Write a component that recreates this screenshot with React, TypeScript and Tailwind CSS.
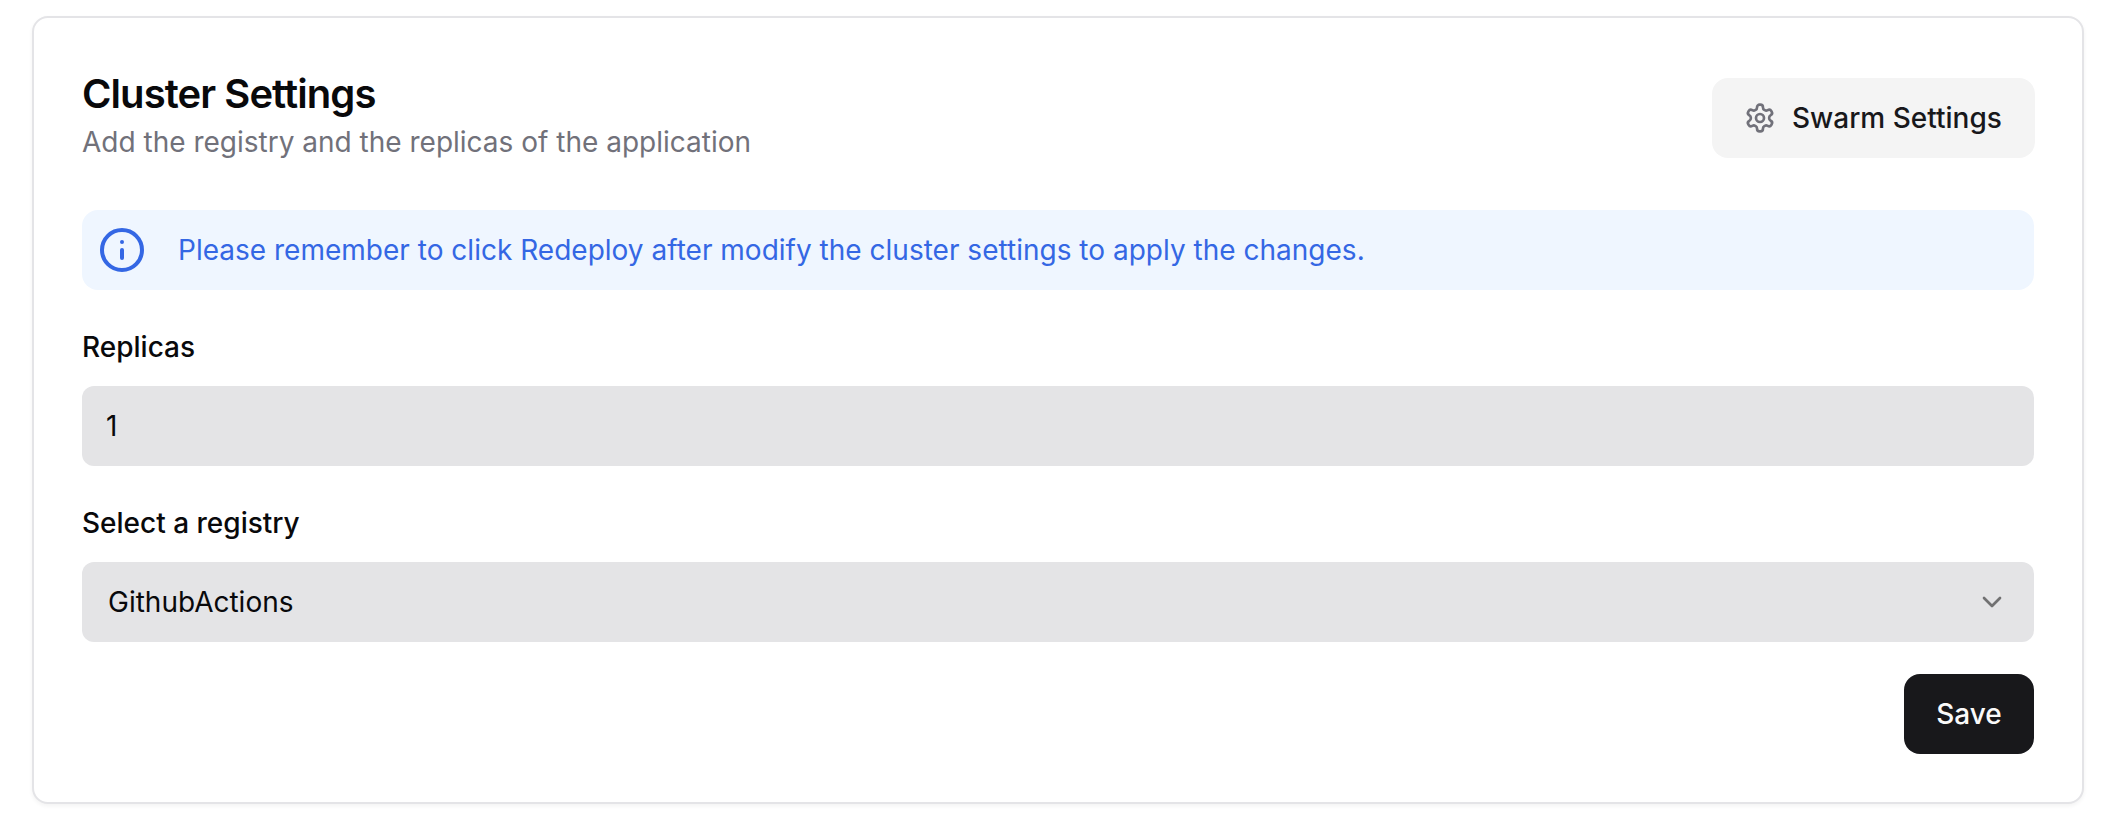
import { ChevronDown, Info } from "lucide-react";

function GearIcon({ className }: { className?: string }) {
  return (
    <svg
      viewBox="0 0 24 24"
      fill="none"
      stroke="currentColor"
      strokeWidth="2"
      strokeLinecap="round"
      strokeLinejoin="round"
      className={className}
    >
      <path d="M12.22 2h-.44a2 2 0 0 0-2 2v.18a2 2 0 0 1-1 1.73l-.43.25a2 2 0 0 1-2 0l-.15-.08a2 2 0 0 0-2.73.73l-.22.38a2 2 0 0 0 .73 2.73l.15.1a2 2 0 0 1 1 1.72v.51a2 2 0 0 1-1 1.74l-.15.09a2 2 0 0 0-.73 2.73l.22.38a2 2 0 0 0 2.73.73l.15-.08a2 2 0 0 1 2 0l.43.25a2 2 0 0 1 1 1.73V20a2 2 0 0 0 2 2h.44a2 2 0 0 0 2-2v-.18a2 2 0 0 1 1-1.73l.43-.25a2 2 0 0 1 2 0l.15.08a2 2 0 0 0 2.73-.73l.22-.39a2 2 0 0 0-.73-2.73l-.15-.08a2 2 0 0 1-1-1.74v-.5a2 2 0 0 1 1-1.74l.15-.09a2 2 0 0 0 .73-2.73l-.22-.38a2 2 0 0 0-2.73-.73l-.15.08a2 2 0 0 1-2 0l-.43-.25a2 2 0 0 1-1-1.73V4a2 2 0 0 0-2-2z" />
      <circle cx="12" cy="12" r="3" />
    </svg>
  );
}

export default function App() {
  return (
    <main className="h-[824px] bg-white pt-4 pr-[34px] pb-5 pl-8 font-['Inter',sans-serif] text-[28px] leading-10 text-[#09090b]">
      <section className="flex h-full flex-col rounded-[16px] border-2 border-[#e4e4e7] bg-white p-12 shadow-[0_2px_4px_0_rgba(0,0,0,0.05)]">
        <header className="flex h-24 items-start justify-between">
          <div>
            <h1 className="text-[40px] leading-[56px] font-semibold tracking-[-0.93px]">Cluster Settings</h1>
            <p className="text-[#71717a]">Add the registry and the replicas of the application</p>
          </div>
          <button className="mt-3 -mr-px flex h-20 w-[323px] items-center rounded-[16px] bg-[#f4f4f4] pl-8 font-medium text-[#18181b]">
            <GearIcon className="mr-4 size-8 text-[#71717a]" />
            Swarm Settings
          </button>
        </header>

        <div className="mt-12 flex h-20 items-center gap-8 rounded-[16px] bg-[#eff6ff] px-4 text-[#3467e4]">
          <Info className="size-12" strokeWidth={2} />
          <p className="tracking-[0.01px]">Please remember to click Redeploy after modify the cluster settings to apply the changes.</p>
        </div>

        <div className="mt-[37px]">
          <label htmlFor="replicas" className="block font-medium">Replicas</label>
          <input
            id="replicas"
            defaultValue="1"
            className="mt-[19px] block h-20 w-full rounded-[12px] bg-[#e4e4e6] px-6 outline-none"
          />
        </div>

        <div className="mt-[37px]">
          <div className="font-medium">Select a registry</div>
          <button className="mt-[19px] flex h-20 w-full items-center justify-between rounded-[12px] bg-[#e4e4e6] px-[26px]">
            <span>GithubActions</span>
            <ChevronDown className="size-8 text-black opacity-50" />
          </button>
        </div>

        <div className="mt-8 flex justify-end">
          <button className="h-20 w-[130px] rounded-[16px] bg-[#18181b] font-medium text-[#fafafa]">Save</button>
        </div>
      </section>
    </main>
  );
}
